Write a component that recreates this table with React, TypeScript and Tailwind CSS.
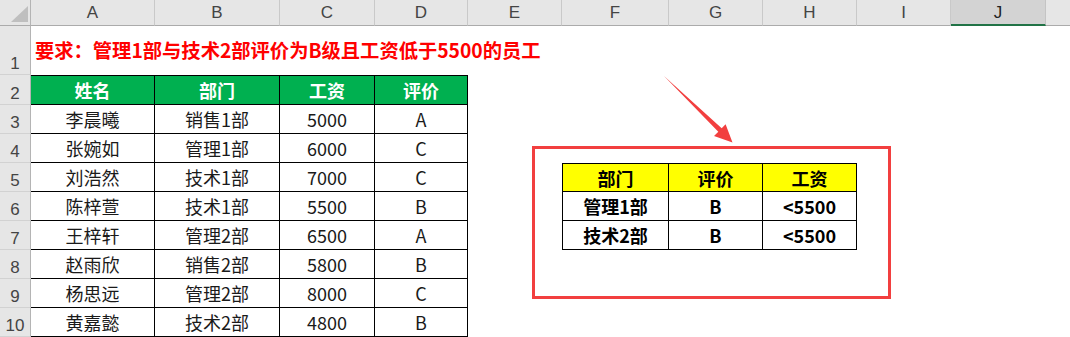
import React from 'react';

const letters = ['A', 'B', 'C', 'D', 'E', 'F', 'G', 'H', 'I', 'J'];
const colW = [
    'w-[124px]',
    'w-[125px]',
    'w-[95px]',
    'w-[93px]',
    'w-[94px]',
    'w-[107px]',
    'w-[94px]',
    'w-[94px]',
    'w-[94px]',
    'w-[95px]',
];
const rowH: Record<number, string> = {
    1: 'h-[49px]',
    2: 'h-[30px]',
};

const staff = [
    ['李晨曦', '销售1部', '5000', 'A'],
    ['张婉如', '管理1部', '6000', 'C'],
    ['刘浩然', '技术1部', '7000', 'C'],
    ['陈梓萱', '技术1部', '5500', 'B'],
    ['王梓轩', '管理2部', '6500', 'A'],
    ['赵雨欣', '销售2部', '5800', 'B'],
    ['杨思远', '管理2部', '8000', 'C'],
    ['黄嘉懿', '技术2部', '4800', 'B'],
];

const criteria = [
    ['部门', '评价', '工资'],
    ['管理1部', 'B', '<5500'],
    ['技术2部', 'B', '<5500'],
];

// text + classes for one cell (row r, column index c)
const cellOf = (r: number, c: number): { text: string; cls: string } => {
    if (r === 2 && c < 4) {
        return {
            text: ['姓名', '部门', '工资', '评价'][c],
            cls: 'border-t border-r border-b border-black bg-[#00b050] text-white font-bold',
        };
    }
    if (r >= 3 && c < 4) {
        return { text: staff[r - 3][c], cls: 'border-r border-b border-black text-[#1a1a1a]' };
    }
    if (r >= 5 && r <= 7 && c >= 5 && c <= 7) {
        let cls = 'border-r border-b border-black font-bold text-black';
        if (r === 5) cls += ' border-t bg-[#ffff00]';
        if (c === 5) cls += ' border-l';
        return { text: criteria[r - 5][c - 5], cls };
    }
    return { text: '', cls: '' };
};

const Row: React.FC<{ r: number }> = ({ r }) => {
    const h = rowH[r] ?? 'h-[29px]';
    return (
        <div className={`flex ${h}`}>
            <div className="w-[31px] shrink-0 bg-[#e6e6e6] border-r border-r-[#b4b4b4] border-b border-b-[#d2d2d2] flex items-end justify-center pb-[1px] text-[17px] leading-none text-[#444] font-['Liberation_Sans',sans-serif]">
                <span className="mb-[1px]">{r}</span>
            </div>
            {letters.map((_, c) => {
                if (r === 1 && c === 0) {
                    return (
                        <div key={c} className={`${colW[c]} shrink-0 flex items-center pl-[4px] relative z-10`}>
                            <span className="whitespace-nowrap text-[19.3px] font-bold text-[#ff0000] leading-none">
                                要求：管理1部与技术2部评价为B级且工资低于5500的员工
                            </span>
                        </div>
                    );
                }
                const { text, cls } = cellOf(r, c);
                return (
                    <div
                        key={c}
                        className={`${colW[c]} shrink-0 flex items-center justify-center text-[18px] leading-none ${cls}`}
                    >
                        {text}
                    </div>
                );
            })}
            <div className="flex-1" />
        </div>
    );
};

const App: React.FC = () => {
    return (
        <div className="relative w-[1070px] h-[337px] overflow-hidden bg-white font-['Noto_Sans_CJK_SC',sans-serif]">
            {/* column headers */}
            <div className="flex h-[26px]">
                <div className="w-[31px] shrink-0 bg-[#e6e6e6] border-r border-r-[#b4b4b4] border-b border-b-[#ababab] relative">
                    <svg className="absolute left-[11px] top-[6px]" width="17" height="16" viewBox="0 0 17 16">
                        <polygon points="17,0 17,16 0,16" fill="#bfbfbf" />
                    </svg>
                </div>
                {letters.map((l, c) => (
                    <div
                        key={l}
                        className={`${colW[c]} shrink-0 flex items-center justify-center text-[17px] leading-none font-['Liberation_Sans',sans-serif] ${
                            l === 'J'
                                ? 'bg-[#d3d3d3] border-r border-r-[#c4c4c4] border-b-2 border-b-[#217346] text-[#222]'
                                : 'bg-[#e6e6e6] border-r border-r-[#c9c9c9] border-b border-b-[#ababab] text-[#444]'
                        }`}
                    >
                        {l}
                    </div>
                ))}
                <div className="flex-1 bg-[#e6e6e6] border-b border-b-[#ababab]" />
            </div>

            {/* sheet rows */}
            {[1, 2, 3, 4, 5, 6, 7, 8, 9, 10].map((r) => (
                <Row key={r} r={r} />
            ))}

            {/* red frame shape */}
            <div className="absolute left-[532px] top-[146px] w-[359px] h-[153px] border-[3px] border-[#f23f3f] pointer-events-none" />

            {/* arrow shape */}
            <svg className="absolute left-0 top-0 pointer-events-none" width="1070" height="337" viewBox="0 0 1070 337">
                <polygon
                    points="664,76 721.7,128.2 725.6,124.3 732.5,142.5 714,136 718.3,131.8"
                    fill="#f23f3f"
                />
            </svg>
        </div>
    );
};

export default App;
